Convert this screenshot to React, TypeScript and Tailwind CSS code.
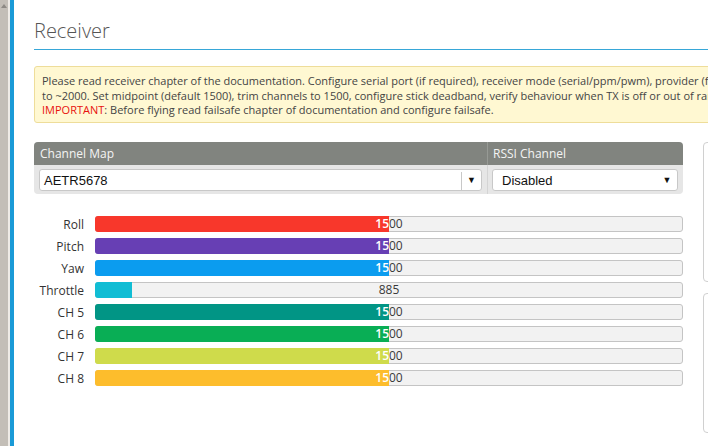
import React from "react";

const channels = [
  { name: "Roll", value: 1500, color: "#f8372b" },
  { name: "Pitch", value: 1500, color: "#673fb4" },
  { name: "Yaw", value: 1500, color: "#0b9cef" },
  { name: "Throttle", value: 885, color: "#11bdd4" },
  { name: "CH 5", value: 1500, color: "#019585" },
  { name: "CH 6", value: 1500, color: "#09ae55" },
  { name: "CH 7", value: 1500, color: "#cfdb4b" },
  { name: "CH 8", value: 1500, color: "#fdbd2c" },
];

function Bar({ value, color }: { value: number; color: string }) {
  const pct = ((value - 800) / 1400) * 100;
  return (
    <div className="relative h-[16px] w-[588px] rounded-[3px] border border-[#c4c4c4] bg-[#f2f2f2]">
      <div className="absolute inset-0 flex items-center justify-center text-[12px] leading-none text-[#3a3a3a]">
        {value}
      </div>
      <div
        className="absolute left-[-1px] top-[-1px] bottom-[-1px] overflow-hidden rounded-l-[3px]"
        style={{ width: `calc(${pct}% + 1px)`, backgroundColor: color }}
      >
        <div className="absolute left-[1px] top-[1px] bottom-[1px] flex w-[586px] items-center justify-center text-[12px] leading-none font-semibold text-white">
          {value}
        </div>
      </div>
    </div>
  );
}

export default function App() {
  return (
    <div
      className="flex h-[446px] w-[708px] overflow-hidden bg-white"
      style={{ fontFamily: '"Open Sans", "Noto Sans", sans-serif' }}
    >
      <div className="relative w-[8px] shrink-0 bg-[#c3beb7]">
        <svg className="absolute left-[1px] top-[4px]" width="6" height="4" viewBox="0 0 6 4">
          <path d="M0 4 L3 0 L6 4 Z" fill="#8d8984" />
        </svg>
      </div>
      <div className="w-[2px] shrink-0 bg-[#efebe6]" />
      <div className="w-[4px] shrink-0 bg-[#1a9ad7]" />
      <div className="w-[900px] shrink-0 pl-[20px]">
        <div className="pt-[17px] pb-[5px] text-[20px] font-light leading-[27px] text-[#555]">
          Receiver
        </div>
        <div className="h-[1px] bg-[#37a7d8]" />
        <div className="mt-[16px] h-[57px] rounded-[3px] border border-[#eedd9a] bg-[#fff8d2] px-[7px] pt-[7px] text-[11px] leading-[14.5px] text-[#444] whitespace-nowrap">
          <div>
            Please read receiver chapter of the documentation. Configure serial port (if required), receiver mode (serial/ppm/pwm), provider (for serial receivers), bind receiver, set channel map, configure channel endpoints/range on TX so that all channels go from ~1000
          </div>
          <div>
            to ~2000. Set midpoint (default 1500), trim channels to 1500, configure stick deadband, verify behaviour when TX is off or out of range.
          </div>
          <div>
            <span className="text-[#e8120f]">IMPORTANT</span>: Before flying read failsafe chapter of documentation and configure failsafe.
          </div>
        </div>
        <div className="mt-[19px] flex gap-[20px]">
          <div className="w-[649px] shrink-0">
            <div className="overflow-hidden rounded-[4px] bg-[#e6e6e6]">
              <div className="flex h-[23px] bg-[#81847f] text-[12px] leading-[24px] text-[#f4f4f4]">
                <div className="w-[453px] pl-[6px]">Channel Map</div>
                <div className="flex-1 border-l border-[#979a95] pl-[5px]">RSSI Channel</div>
              </div>
              <div className="flex h-[29px] items-center">
                <div className="flex w-[453px] items-center pl-[5px]">
                  <div
                    className="flex h-[22px] w-[443px] items-center rounded-[3px] border border-[#c8c8c8] bg-white pt-[2px] text-[13px] text-[#111]"
                    style={{ fontFamily: '"Liberation Sans", Arial, sans-serif' }}
                  >
                    <div className="flex-1 pl-[4px]">AETR5678</div>
                    <div className="flex h-full w-[20px] items-center justify-center border-l border-[#c8c8c8] text-[9px]">▼</div>
                  </div>
                </div>
                <div className="flex h-full flex-1 items-center border-l border-[#d4d4d4] pl-[4px]">
                  <div
                    className="flex h-[22px] w-[186px] items-center rounded-[3px] border border-[#c8c8c8] bg-white pt-[2px] text-[13px] text-[#111]"
                    style={{ fontFamily: '"Liberation Sans", Arial, sans-serif' }}
                  >
                    <div className="flex-1 pl-[9px]">Disabled</div>
                    <div className="flex w-[20px] items-center justify-center text-[9px]">▼</div>
                  </div>
                </div>
              </div>
            </div>
            <div className="mt-[22px] flex flex-col gap-[6px]">
              {channels.map((c) => (
                <div key={c.name} className="flex h-[16px] items-center">
                  <div className="relative top-[1px] w-[50px] text-right text-[12px] leading-[16px] text-[#333]">{c.name}</div>
                  <div className="ml-[11px]">
                    <Bar value={c.value} color={c.color} />
                  </div>
                </div>
              ))}
            </div>
          </div>
          <div className="flex flex-col gap-[11px]">
            <div className="h-[140px] w-[200px] rounded-[4px] border border-[#d0d0d0]" />
            <div className="h-[140px] w-[200px] rounded-[4px] border border-[#d0d0d0]" />
          </div>
        </div>
      </div>
    </div>
  );
}
